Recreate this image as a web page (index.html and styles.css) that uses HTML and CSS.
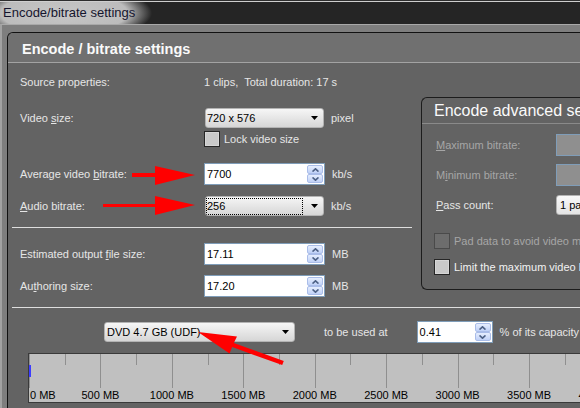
FILE: index.html
```html
<!DOCTYPE html>
<html>
<head>
<meta charset="utf-8">
<link rel="stylesheet" href="styles.css">
</head>
<body>
<div class="window">
  <div class="titlebar"><span class="title">Encode/bitrate settings</span></div>
  <div class="frame">
    <div class="panel">
      <div class="panel-head">Encode / bitrate settings</div>
      <div class="panel-body">
        <div class="top">
          <div class="left">
            <div class="row r-source">
              <span class="label">Source properties:</span>
              <span class="value">1 clips,&nbsp; Total duration: 17 s</span>
            </div>
            <div class="row r-size">
              <span class="label">Video <u>s</u>ize:</span>
              <div class="combo w119"><span class="ctext">720 x 576</span><svg class="caret" width="7" height="4" viewBox="0 0 7 4"><path d="M0 0H7L3.5 4Z"/></svg></div>
              <span class="unit">pixel</span>
            </div>
            <div class="row r-lock">
              <span class="label"></span>
              <span class="check"><span class="box"></span><span>Lock video size</span></span>
            </div>
            <div class="row r-avg">
              <span class="label">Average video <u>b</u>itrate:</span>
              <div class="field w121"><span class="ftext">7700</span>
                <div class="spin"><span class="sb"><svg width="7" height="4" viewBox="0 0 7 4"><path d="M0.5 3.6L3.5 0.8L6.5 3.6"/></svg></span><span class="sb"><svg width="7" height="4" viewBox="0 0 7 4"><path d="M0.5 0.4L3.5 3.2L6.5 0.4"/></svg></span></div>
              </div>
              <span class="unit">kb/s</span>
            </div>
            <div class="row r-audio">
              <span class="label"><u>A</u>udio bitrate:</span>
              <div class="combo w119 focused"><span class="focus">256</span><svg class="caret" width="7" height="4" viewBox="0 0 7 4"><path d="M0 0H7L3.5 4Z"/></svg></div>
              <span class="unit">kb/s</span>
            </div>
            <div class="sep sep-left"></div>
            <div class="row r-est">
              <span class="label">Estimated output <u>f</u>ile size:</span>
              <div class="field w121"><span class="ftext">17.11</span>
                <div class="spin"><span class="sb"><svg width="7" height="4" viewBox="0 0 7 4"><path d="M0.5 3.6L3.5 0.8L6.5 3.6"/></svg></span><span class="sb"><svg width="7" height="4" viewBox="0 0 7 4"><path d="M0.5 0.4L3.5 3.2L6.5 0.4"/></svg></span></div>
              </div>
              <span class="unit">MB</span>
            </div>
            <div class="row r-auth">
              <span class="label">Au<u>t</u>horing size:</span>
              <div class="field w121"><span class="ftext">17.20</span>
                <div class="spin"><span class="sb"><svg width="7" height="4" viewBox="0 0 7 4"><path d="M0.5 3.6L3.5 0.8L6.5 3.6"/></svg></span><span class="sb"><svg width="7" height="4" viewBox="0 0 7 4"><path d="M0.5 0.4L3.5 3.2L6.5 0.4"/></svg></span></div>
              </div>
              <span class="unit">MB</span>
            </div>
          </div>
          <div class="adv">
            <div class="adv-head">Encode advanced settings</div>
            <div class="arow a-max">
              <span class="alabel disabled"><u>M</u>aximum bitrate:</span>
              <div class="field dis"></div>
            </div>
            <div class="arow a-min">
              <span class="alabel disabled">M<u>i</u>nimum bitrate:</span>
              <div class="field dis"></div>
            </div>
            <div class="arow a-pass">
              <span class="alabel"><u>P</u>ass count:</span>
              <div class="combo wpass"><span class="ctext">1 pass</span></div>
            </div>
            <div class="acheck a-pad">
              <span class="box disbox"></span><span class="disabled">Pad data to avoid video multiplexing problems</span>
            </div>
            <div class="acheck a-limit">
              <span class="box"></span><span class="bright">Limit the maximum video bitrate</span>
            </div>
          </div>
        </div>
        <div class="sep sep-full"></div>
        <div class="disc-row">
          <div class="combo wdisc"><span class="ctext">DVD 4.7 GB (UDF)</span><svg class="caret" width="7" height="4" viewBox="0 0 7 4"><path d="M0 0H7L3.5 4Z"/></svg></div>
          <span class="used">to be used at</span>
          <div class="field w76"><span class="ftext">0.41</span>
            <div class="spin"><span class="sb"><svg width="7" height="4" viewBox="0 0 7 4"><path d="M0.5 3.6L3.5 0.8L6.5 3.6"/></svg></span><span class="sb"><svg width="7" height="4" viewBox="0 0 7 4"><path d="M0.5 0.4L3.5 3.2L6.5 0.4"/></svg></span></div>
          </div>
          <span class="unit">% of its capacity</span>
        </div>
        <div class="ruler">
          <div class="scale">
            <span class="seg"></span><span class="seg"></span><span class="seg"></span><span class="seg"></span><span class="seg"></span><span class="seg"></span><span class="seg"></span><span class="seg"></span><span class="seg"></span>
          </div>
          <div class="labels">
            <span class="lab0">0 MB</span>
            <span class="lab">500 MB</span>
            <span class="lab">1000 MB</span>
            <span class="lab">1500 MB</span>
            <span class="lab">2000 MB</span>
            <span class="lab">2500 MB</span>
            <span class="lab">3000 MB</span>
            <span class="lab">3500 MB</span>
            <span class="lab">4000 MB</span>
          </div>
          <span class="fill" style="width:2px"></span>
        </div>
      </div>
    </div>
  </div>
  <svg class="arrows" width="580" height="408" viewBox="0 0 580 408">
    <path d="M132 173H155V166L195 175L155 185V177H132Z"/>
    <path d="M103 204H155V196L195 205L155 215V207H103Z"/>
    <path d="M198 332L237 336.5L233.8 342.9L283.8 360.9L282.2 365.1L232.2 347.1L229.5 353.5Z"/>
  </svg>
</div>
</body>
</html>
```

FILE: styles.css
```css
* { box-sizing: border-box; }
html, body { margin: 0; padding: 0; }
body {
  width: 580px;
  height: 408px;
  overflow: hidden;
  background: #7f7f7f;
  font-family: "Liberation Sans", Arial, sans-serif;
  font-size: 11px;
  color: #e6e6e6;
}
u { text-decoration: underline; text-underline-offset: 1px; }

.window {
  position: relative;
  width: 580px;
  height: 408px;
  overflow: hidden;
}

/* title bar */
.titlebar {
  height: 24px;
  display: flex;
  align-items: center;
  padding: 1px 0 0 3px;
  background:
    radial-gradient(ellipse 88px 28px at 64px 13px, #c6c6c6 0%, #bcbcbc 72%, rgba(37,37,37,0) 100%),
    #252525;
  box-shadow: inset 0 1px 0 #2e2e2e, inset 0 2px 0 #cfcfcf;
}
.title {
  font-size: 13px;
  color: #15152e;
  line-height: 22px;
  white-space: nowrap;
}

/* window frame */
.frame {
  height: 384px;
  border-top: 1px solid #a9a9a9;
  border-left: 2px solid #a2a2a2;
  padding: 7px 0 0 5px;
  background: #7e7e7e;
}
.panel {
  width: 760px;
  height: 380px;
  border: 1px solid #111;
  border-right: 0;
  border-bottom: 0;
  border-radius: 6px 0 0 0;
  overflow: hidden;
  background: #636363;
  display: flex;
  flex-direction: column;
}
.panel-head {
  flex: none;
  height: 30px;
  background: #707070;
  border-bottom: 1px solid #a3a3a3;
  padding: 3px 0 0 14px;
  font-weight: bold;
  font-size: 14.5px;
  line-height: 26px;
  color: #fafafa;
  white-space: nowrap;
}
.panel-body {
  flex: 1;
  display: flex;
  flex-direction: column;
}

/* top area */
.top {
  display: flex;
  align-items: flex-start;
}
.left {
  flex: none;
  width: 400px;
  margin-left: 4px;
  display: flex;
  flex-direction: column;
}
.row {
  display: flex;
  align-items: center;
  padding-left: 8px;
  white-space: nowrap;
}
.label { flex: none; width: 184px; }
.unit { margin-left: 7px; white-space: nowrap; }

.r-source { margin-top: 9px; height: 20px; }
.r-size { margin-top: 16px; height: 20px; }
.r-lock { margin-top: 3px; height: 16px; }
.r-avg { margin-top: 16px; height: 22px; }
.r-audio { margin-top: 11px; height: 20px; }
.r-est { margin-top: 15px; height: 22px; }
.r-auth { margin-top: 10px; height: 22px; }

.sep { height: 1px; background: #dedede; flex: none; }
.sep-left { margin-top: 11px; }
.sep-full { margin: 10px 0 0 4px; }

/* controls */
.combo {
  flex: none;
  display: flex;
  align-items: center;
  height: 20px;
  border: 1px solid #b3b3b3;
  border-radius: 3px;
  background: linear-gradient(#f6f6f6, #e6e6e6 50%, #d6d6d6);
  color: #000;
  padding: 0 5px 0 1px;
  overflow: hidden;
  white-space: nowrap;
}
.combo .ctext { flex: 1; line-height: 18px; }
.combo .caret { flex: none; fill: #000; }
.w119 { width: 119px; margin-left: 1px; }
.focused { padding-left: 0; }
.focus {
  flex: 1;
  height: 17px;
  line-height: 15px;
  border: 1px dotted #000;
  margin-right: 8px;
}

.field {
  flex: none;
  display: flex;
  align-items: center;
  height: 22px;
  border: 1px solid #7f9db9;
  background: #fff;
  color: #000;
  padding: 1px 1px 1px 2px;
  overflow: hidden;
}
.w121 { width: 121px; }
.w76 { width: 76px; }
.ftext { flex: 1; white-space: nowrap; }
.spin {
  flex: none;
  width: 16px;
  height: 18px;
  display: flex;
  flex-direction: column;
}
.sb {
  flex: 1;
  display: flex;
  align-items: center;
  justify-content: center;
  border: 1px solid #aabde9;
  border-radius: 2px;
  background: linear-gradient(#e6eefe, #c0d1f7);
}
.sb svg { fill: none; stroke: #4d6185; stroke-width: 1.6; }

.check {
  display: flex;
  align-items: center;
  gap: 4px;
  color: #e6e6e6;
}
.box {
  flex: none;
  width: 16px;
  height: 16px;
  border: 1px solid #262626;
  background: #c9c9c9;
  box-shadow: inset 0 0 0 1px #d6d6d6;
}
.disbox {
  border-color: #4a4a4a;
  background: #6d6d6d;
  box-shadow: none;
}

/* advanced panel */
.adv {
  flex: none;
  width: 260px;
  margin: 34px 0 0 9px;
  border: 1px solid #1c1c1c;
  border-right: 0;
  border-radius: 6px 0 0 6px;
  padding-bottom: 14px;
  white-space: nowrap;
}
.adv-head {
  height: 26px;
  border-bottom: 1px solid #8a8a8a;
  padding: 1px 0 0 12px;
  font-size: 16px;
  line-height: 24px;
  color: #fafafa;
}
.arow {
  display: flex;
  align-items: center;
  padding-left: 14px;
}
.alabel { flex: none; width: 120px; }
.disabled { color: #a6a6a6; }
.bright { color: #f2f2f2; }
.field.dis { width: 90px; background: #8f8f8f; }
.wpass { width: 90px; padding-left: 3px; background: linear-gradient(#f8f8f8, #e4e4e4); }
.a-max { margin-top: 10px; height: 22px; }
.a-min { margin-top: 8px; height: 22px; }
.a-pass { margin-top: 9px; height: 20px; }
.acheck {
  display: flex;
  align-items: center;
  gap: 4px;
  padding-left: 12px;
  height: 16px;
}
.a-pad { margin-top: 18px; }
.a-limit { margin-top: 10px; }

/* disc row */
.disc-row {
  display: flex;
  align-items: center;
  height: 22px;
  margin-top: 13px;
  padding-left: 96px;
  white-space: nowrap;
}
.wdisc { width: 191px; padding-left: 2px; }
.used { margin: 0 29px; }

/* ruler */
.ruler {
  position: relative;
  flex: none;
  height: 50px;
  margin: 10px 0 0 20px;
  border: 1px solid #3a3a3a;
  border-right: 0;
  background: #c0c0c0;
  overflow: hidden;
}
.scale {
  display: flex;
  height: 34px;
}
.seg {
  flex: 0 0 71.45px;
  border-left: 1px solid #8f8f8f;
}
.seg::after {
  content: "";
  display: block;
  margin-left: 34.7px;
  width: 1px;
  height: 11px;
  background: #8f8f8f;
}
.labels {
  display: flex;
  margin-top: 1px;
  height: 13px;
  line-height: 13px;
  color: #000;
  white-space: nowrap;
}
.lab0 { flex: 0 0 35.725px; padding-left: 1px; }
.lab { flex: 0 0 71.45px; text-align: center; }
.fill {
  position: absolute;
  left: 0;
  top: 11px;
  height: 12px;
  background: #3c3cff;
}

/* annotation arrows */
.arrows {
  position: absolute;
  left: 0;
  top: 0;
  pointer-events: none;
  fill: #ff0000;
}
```
